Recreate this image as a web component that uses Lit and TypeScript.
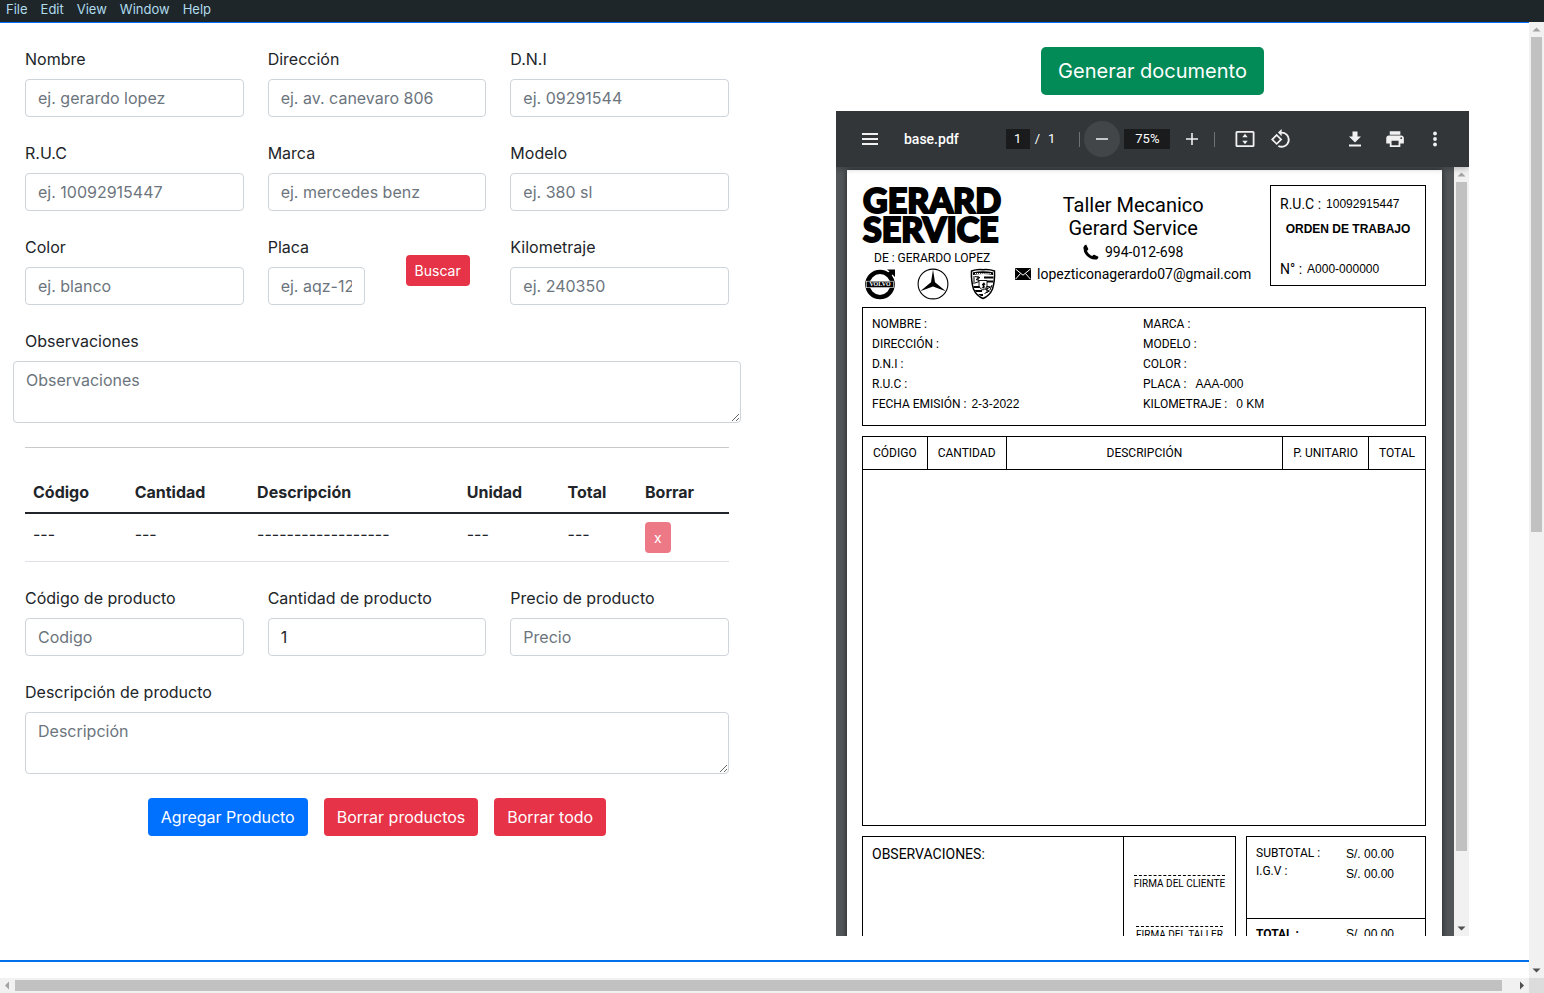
import { LitElement, html, css, svg, nothing } from "lit";
import { customElement, property } from "lit/decorators.js";
import { classMap } from "lit/directives/class-map.js";
import { styleMap } from "lit/directives/style-map.js";

@customElement("scroll-bar")
class ScrollBar extends LitElement {
  @property({ type: Boolean, reflect: true }) horizontal = false;
  @property({ type: Number }) thumb = 50;

  static styles = css`
    :host {
      display: flex;
      flex-direction: column;
      width: 15px;
      background: #f1f1f1;
      box-sizing: border-box;
    }
    :host([horizontal]) {
      flex-direction: row;
      width: auto;
      height: 15px;
    }
    .arrow {
      width: 15px;
      height: 15px;
      flex: none;
      display: block;
      fill: #a3a3a3;
    }
    .arrow.on {
      fill: #505050;
    }
    .track {
      flex: 1;
      display: flex;
      flex-direction: column;
      padding: 0 2px;
    }
    :host([horizontal]) .track {
      flex-direction: row;
      padding: 2px 0;
    }
    .thumb {
      background: #c1c1c1;
    }
  `;

  render() {
    const start = this.horizontal ? "M5 7.5 L9 3.5 V11.5 Z" : "M3.5 9.5 L7.5 5.5 L11.5 9.5 Z";
    const end = this.horizontal ? "M10 7.5 L6 3.5 V11.5 Z" : "M3.5 5.5 L7.5 9.5 L11.5 5.5 Z";
    return html`
      <svg class="arrow" viewBox="0 0 15 15"><path d=${start} /></svg>
      <div class="track"><div class="thumb" style=${styleMap({ flex: `0 0 ${this.thumb}%` })}></div></div>
      <svg class=${classMap({ arrow: true, on: true })} viewBox="0 0 15 15"><path d=${end} /></svg>
    `;
  }
}

@customElement("order-form")
class OrderForm extends LitElement {
  static styles = css`
    :host {
      display: block;
      font: 16px/24px Inter, sans-serif;
      color: #212529;
    }
    * {
      box-sizing: border-box;
    }
    form {
      display: flex;
      flex-direction: column;
      gap: 24px;
    }
    .row {
      display: grid;
      grid-template-columns: repeat(3, minmax(0, 1fr));
      gap: 24px;
    }
    .split {
      display: grid;
      grid-template-columns: repeat(2, minmax(0, 1fr));
      gap: 24px;
      place-items: center;
    }
    .field {
      display: flex;
      flex-direction: column;
      gap: 8px;
      width: 100%;
    }
    input,
    textarea {
      display: block;
      width: 100%;
      font: inherit;
      color: #212529;
      background: #fff;
      border: 1px solid #ced4da;
      border-radius: 4px;
      padding: 6px 12px;
      margin: 0;
      appearance: none;
    }
    input {
      height: 38px;
    }
    input[type="number"]::-webkit-inner-spin-button {
      appearance: none;
    }
    textarea {
      height: 62px;
      resize: vertical;
    }
    ::placeholder {
      color: #6c757d;
      opacity: 1;
    }
    .wide {
      margin: 0 -12px;
      width: auto;
    }
    .wide label {
      padding-left: 12px;
    }
    hr {
      width: 100%;
      margin: 0;
      border: 0;
      height: 1px;
      background: #c8c9ca;
    }
    table {
      width: 100%;
      border-collapse: collapse;
    }
    th,
    td {
      text-align: left;
      vertical-align: top;
      padding: 8px;
      border-bottom: 1px solid #dee2e6;
    }
    th {
      font-weight: 700;
      border-bottom: 2px solid #212529;
    }
    button {
      font: inherit;
      color: #fff;
      border: 1px solid transparent;
      border-radius: 4px;
      padding: 6px 12px;
      background-clip: border-box;
    }
    .primary {
      background: #0070ff;
    }
    .danger {
      background: #e63347;
    }
    .small {
      display: block;
      font-size: 14px;
      line-height: 21px;
      padding: 4px 8px;
    }
    button:disabled {
      opacity: 0.65;
    }
    .actions {
      display: flex;
      justify-content: center;
      gap: 16px;
    }
  `;

  private field(id: string, label: string, placeholder = "", value?: string) {
    return html`<div class="field">
      <label for=${id}>${label}</label>
      <input id=${id} type=${value ? "number" : "text"} placeholder=${placeholder || nothing} .value=${value ?? ""} />
    </div>`;
  }

  render() {
    return html`
      <form>
        <div class="row">
          ${this.field("nombre", "Nombre", "ej. gerardo lopez")}
          ${this.field("direccion", "Dirección", "ej. av. canevaro 806")}
          ${this.field("dni", "D.N.I", "ej. 09291544")}
          ${this.field("ruc", "R.U.C", "ej. 10092915447")}
          ${this.field("marca", "Marca", "ej. mercedes benz")}
          ${this.field("modelo", "Modelo", "ej. 380 sl")}
          ${this.field("color", "Color", "ej. blanco")}
          <div class="split">
            ${this.field("placa", "Placa", "ej. aqz-123")}
            <button type="button" class="danger small">Buscar</button>
          </div>
          ${this.field("km", "Kilometraje", "ej. 240350")}
        </div>
        <div class="field wide">
          <label for="obs">Observaciones</label>
          <textarea id="obs" placeholder="Observaciones"></textarea>
        </div>
        <hr />
        <table>
          <thead>
            <tr>
              ${["Código", "Cantidad", "Descripción", "Unidad", "Total", "Borrar"].map((t) => html`<th>${t}</th>`)}
            </tr>
          </thead>
          <tbody>
            <tr>
              ${["---", "---", "------------------", "---", "---"].map((t) => html`<td>${t}</td>`)}
              <td><button type="button" class="danger small" disabled>x</button></td>
            </tr>
          </tbody>
        </table>
        <div class="row">
          ${this.field("codigo", "Código de producto", "Codigo")}
          ${this.field("cantidad", "Cantidad de producto", "", "1")}
          ${this.field("precio", "Precio de producto", "Precio")}
        </div>
        <div class="field">
          <label for="desc">Descripción de producto</label>
          <textarea id="desc" placeholder="Descripción"></textarea>
        </div>
        <div class="actions">
          <button type="button" class="primary">Agregar Producto</button>
          <button type="button" class="danger">Borrar productos</button>
          <button type="button" class="danger">Borrar todo</button>
        </div>
      </form>
    `;
  }
}

const volvo = html`<svg width="30" height="32" viewBox="0 0 30 32">
  <circle cx="15" cy="16.5" r="12.6" fill="none" stroke="#000" stroke-width="4.4" />
  <path d="M22 1.500 H30 V9 L27.500 6.500 L24 10 L20.500 6.500 L24.500 3.500 Z" />
  <rect x="1.500" y="13.200" width="27" height="6.500" stroke="#fff" stroke-width="0.600" />
  <text x="15" y="18.400" text-anchor="middle" font-family="Liberation Serif, serif" font-weight="700" font-size="6" fill="#fff">VOLVO</text>
</svg>`;

const mercedes = html`<svg width="32" height="32" viewBox="0 0 32 32">
  <circle cx="16" cy="16" r="14.900" fill="none" stroke="#000" stroke-width="1.100" />
  <path d="M16 1.500 L18 14.300 L28.800 23.300 L16 18.500 L3.200 23.300 L14 14.300 Z" />
</svg>`;

const porsche = html`<svg width="26" height="32" viewBox="0 0 26 32">
  <path d="M1.500 3 Q7 1 13 1.700 Q19 1 24.500 3 Q25 13 22.500 21 Q19.500 28 13 30.500 Q6.500 28 3.500 21 Q1 13 1.500 3 Z" fill="#fff" stroke="#000" stroke-width="1.500" />
  <path d="M3 4.200 Q13 2.200 23 4.200 V7 Q13 5.200 3 7 Z" />
  <path d="M5 5.500 H21" stroke="#fff" stroke-width="1" stroke-dasharray="1.200 0.700" />
  <path d="M14 8.500 H23.500 V10.500 H14 Z M14 12.500 H23.300 V14.500 H14 Z M3.500 18 H12 V20 H4 Z M4.800 22 H12 V24 H6 Z M8 26 H13 V28 H11 Z" />
  <path d="M5 8.500 L10 9.500 L6 11.500 L10.500 13 L5 15 M4 8 V16 M8 8 V12 M15 18 L20.500 19 L15.500 21.500 L19.500 23 L14.500 25.500 M22 17 L20 22 M17 18 V25" fill="none" stroke="#000" stroke-width="1" />
  <path d="M9 12.500 H17 V18 Q16 21 13 22 Q10 21 9 18 Z" fill="#fff" stroke="#000" stroke-width="0.900" />
  <path d="M11.500 20 Q14 18.500 11.800 16.500 L14 14.200 L15.500 16.500 L14.300 17 Q15.500 19.500 14 20.500 Z" />
</svg>`;

const phone = html`<svg width="16" height="16" viewBox="0 0 16 16">
  <path d="M3.200 0.600 L5.200 4.800 Q5.400 5.400 4.900 5.900 L3.900 6.900 Q5.600 10.600 9.200 12 L10.200 11 Q10.700 10.500 11.300 10.800 L15.400 12.800 Q15.300 15.800 12.200 15.600 Q6.500 15.200 3 11 Q0.300 7.500 0.400 3.400 Q1 1 3.200 0.600 Z" />
</svg>`;

const envelope = html`<svg width="16" height="12" viewBox="0 0 16 12">
  <rect width="16" height="12" />
  <path d="M0.500 1 L8 7.200 L15.500 1 M0.500 11.200 L5.600 5.400 M15.500 11.200 L10.400 5.400" fill="none" stroke="#fff" stroke-width="1" />
</svg>`;

@customElement("order-sheet")
class OrderSheet extends LitElement {
  static styles = css`
    :host {
      display: block;
      background: #fff;
      color: #000;
      padding: 15px 16px 30px 15px;
      font: 12px/20px Roboto, sans-serif;
      box-sizing: border-box;
    }
    * {
      box-sizing: border-box;
    }
    svg {
      display: block;
      flex: none;
    }
    .head {
      display: flex;
      gap: 14px;
      height: 122px;
    }
    .brand {
      display: flex;
      flex-direction: column;
      white-space: nowrap;
    }
    .mark {
      font: 900 34px/29px Lato, sans-serif;
      -webkit-text-stroke: 2px #000;
      padding-left: 1px;
    }
    .owner {
      line-height: 16px;
      padding: 7px 0 2px 12px;
    }
    .logos {
      display: flex;
      justify-content: space-between;
      padding: 0 5px 0 3px;
    }
    .contact {
      display: flex;
      flex-direction: column;
      align-items: center;
      padding-top: 9px;
      font-size: 14px;
      line-height: 22px;
      white-space: nowrap;
    }
    .name {
      font-size: 20px;
      line-height: 23px;
      text-align: center;
      padding-bottom: 1px;
    }
    .line {
      display: flex;
      align-items: center;
      gap: 6px;
    }
    .folio {
      width: 156px;
      margin-left: auto;
      height: 101px;
      border: 1px solid #000;
      padding: 8px 9px;
      display: flex;
      flex-direction: column;
      white-space: nowrap;
    }
    .folio .pair {
      font-size: 14px;
    }
    .value {
      font-family: "Liberation Sans", sans-serif;
      font-size: 12px;
    }
    .order {
      font: 700 12px/20px "Liberation Sans", sans-serif;
      text-align: center;
      padding: 5px 0 20px;
    }
    .pair {
      display: flex;
      gap: 5px;
      white-space: nowrap;
    }
    .pair.far {
      gap: 9px;
    }
    .info {
      display: grid;
      grid-template-columns: 271px 1fr;
      border: 1px solid #000;
      padding: 6px 9px 11px;
    }
    table {
      width: 100%;
      margin-top: 10px;
      border-collapse: collapse;
    }
    th {
      font-weight: 400;
      padding: 6px 10px;
      border: 1px solid #000;
      white-space: nowrap;
      text-align: center;
    }
    .desc {
      width: 100%;
    }
    .items {
      height: 356px;
      padding: 0;
      border: 1px solid #000;
    }
    .foot {
      display: flex;
      gap: 10px;
      height: 134px;
      margin-top: 10px;
    }
    .notes {
      flex: 1;
      display: flex;
      border: 1px solid #000;
    }
    .obs {
      flex: 1;
      font-size: 14px;
      padding: 7px 9px;
    }
    .signs {
      width: 112px;
      border-left: 1px solid #000;
      padding: 38px 9px 0;
      display: flex;
      flex-direction: column;
      align-items: center;
      gap: 34px;
    }
    .sign {
      border-top: 1px dashed #000;
      font-size: 10px;
      line-height: 16px;
      white-space: nowrap;
    }
    .totals {
      width: 180px;
      border: 1px solid #000;
    }
    .sums {
      display: grid;
      grid-template-columns: 90px 1fr;
      height: 82px;
      padding: 7px 9px 0;
      border-bottom: 1px solid #000;
    }
    .labels {
      line-height: 18px;
    }
    .grand {
      display: grid;
      grid-template-columns: 90px 1fr;
      padding: 5px 9px;
    }
  `;

  private pair(label: string, value = "", far = false) {
    return html`<div class=${classMap({ pair: true, far })}>
      <span>${label}</span>${value ? html`<span class="value">${value}</span>` : nothing}
    </div>`;
  }

  render() {
    return html`
      <div class="head">
        <div class="brand">
          <div class="mark">GERARD<br />SERVICE</div>
          <div class="owner">DE : GERARDO LOPEZ</div>
          <div class="logos">${volvo}${mercedes}${porsche}</div>
        </div>
        <div class="contact">
          <div class="name">Taller Mecanico<br />Gerard Service</div>
          <div class="line">${phone}994-012-698</div>
          <div class="line">${envelope}lopezticonagerardo07@gmail.com</div>
        </div>
        <div class="folio">
          ${this.pair("R.U.C :", "10092915447")}
          <div class="order">ORDEN DE TRABAJO</div>
          ${this.pair("N° :", "A000-000000")}
        </div>
      </div>
      <div class="info">
        <div>
          ${this.pair("NOMBRE :")} ${this.pair("DIRECCIÓN :")} ${this.pair("D.N.I :")} ${this.pair("R.U.C :")}
          ${this.pair("FECHA EMISIÓN :", "2-3-2022")}
        </div>
        <div>
          ${this.pair("MARCA :")} ${this.pair("MODELO :")} ${this.pair("COLOR :")}
          ${this.pair("PLACA :", "AAA-000", true)} ${this.pair("KILOMETRAJE :", "0 KM", true)}
        </div>
      </div>
      <table>
        <thead>
          <tr>
            <th>CÓDIGO</th>
            <th>CANTIDAD</th>
            <th class="desc">DESCRIPCIÓN</th>
            <th>P. UNITARIO</th>
            <th>TOTAL</th>
          </tr>
        </thead>
        <tbody>
          <tr>
            <td class="items" colspan="5"></td>
          </tr>
        </tbody>
      </table>
      <div class="foot">
        <div class="notes">
          <div class="obs">OBSERVACIONES:</div>
          <div class="signs">
            <div class="sign">FIRMA DEL CLIENTE</div>
            <div class="sign">FIRMA DEL TALLER</div>
          </div>
        </div>
        <div class="totals">
          <div class="sums">
            <div class="labels">SUBTOTAL :<br />I.G.V :</div>
            <div class="value">S/. 00.00<br />S/. 00.00</div>
          </div>
          <div class="grand"><b>TOTAL :</b><span class="value">S/. 00.00</span></div>
        </div>
      </div>
    `;
  }
}

const glyphs = {
  menu: svg`<path d="M4 6 H20 V8 H4 Z M4 11 H20 V13 H4 Z M4 16 H20 V18 H4 Z" />`,
  minus: svg`<path d="M6 11 H18 V13 H6 Z" />`,
  plus: svg`<path d="M6 11.200 H11.200 V6 H12.800 V11.200 H18 V12.800 H12.800 V18 H11.200 V12.800 H6 Z" />`,
  fit: svg`<path fill-rule="evenodd" d="M4 4 H20 Q21.500 4 21.500 5.500 V18.500 Q21.500 20 20 20 H4 Q2.500 20 2.500 18.500 V5.500 Q2.500 4 4 4 Z M4.300 5.800 V18.200 H19.700 V5.800 Z M12 6.800 L14.700 10.200 H9.300 Z M12 17.200 L9.300 13.800 H14.700 Z" />`,
  rotate: svg`<path d="M7.300 6.400 L0.900 12.800 L7.400 19.200 L13.800 12.800 Z M3.700 12.800 L7.400 9.200 L11 12.800 L7.300 16.500 Z M19.400 6.600 A9 9 0 0 0 13 4 V0.800 L8.800 5 L13 9.200 V6 A7 7 0 1 1 10 19.300 L8.500 20.800 A9 9 0 0 0 19.400 6.600 Z" transform="translate(1.200 1.200) scale(0.880)" />`,
  download: svg`<path d="M18 9.500 H14.500 V4.500 H9.500 V9.500 H6 L12 15.500 Z M6 17.500 V19.500 H18 V17.500 Z" />`,
  print: svg`<path d="M19 8 H5 C3.300 8 2 9.300 2 11 V17 H6 V21 H18 V17 H22 V11 C22 9.300 20.700 8 19 8 Z M16 19 H8 V14 H16 Z M19 12 A1 1 0 1 1 19 10 A1 1 0 0 1 19 12 Z M18 3 H6 V7 H18 Z" transform="translate(1.500 1.500) scale(0.880)" />`,
  more: svg`<circle cx="12" cy="6.500" r="1.900" /><circle cx="12" cy="12" r="1.900" /><circle cx="12" cy="17.500" r="1.900" />`,
};

@customElement("pdf-viewer")
class PdfViewer extends LitElement {
  static styles = css`
    :host {
      display: flex;
      flex-direction: column;
      background: #525659;
      overflow: hidden;
    }
    * {
      box-sizing: border-box;
    }
    .bar {
      flex: none;
      height: 56px;
      display: grid;
      grid-template-columns: 1fr auto 1fr;
      align-items: center;
      background: #323639;
      color: #fff;
      font: 13px/20px Roboto, sans-serif;
      box-shadow: 0 -2px 8px rgba(0, 0, 0, 0.1), 0 2px 6px rgba(0, 0, 0, 0.2);
      z-index: 1;
    }
    .group {
      display: flex;
      align-items: center;
    }
    .left {
      gap: 16px;
      padding-left: 16px;
    }
    .right {
      gap: 4px;
      padding-right: 16px;
      justify-content: flex-end;
    }
    .title {
      font-size: 14px;
      font-weight: 500;
    }
    button {
      width: 36px;
      height: 36px;
      border: 0;
      border-radius: 50%;
      padding: 6px;
      background: none;
      fill: #f1f1f1;
    }
    button svg {
      display: block;
      width: 24px;
      height: 24px;
    }
    .active {
      background: #424649;
      fill: #c4c6c7;
    }
    input {
      height: 20px;
      border: 0;
      margin: 0;
      padding: 0;
      text-align: center;
      font: inherit;
      color: #fff;
      background: #191b1c;
    }
    .page {
      width: 24px;
    }
    .zoom {
      width: 46px;
      margin: 0 4px;
    }
    .slash {
      padding: 0 8px 0 5px;
    }
    .rule {
      width: 1px;
      height: 15px;
      background: #6f7274;
      margin-right: 4px;
    }
    .first {
      margin-left: 24px;
    }
    .second {
      margin: 0 12px 0 4px;
    }
    .body {
      flex: 1;
      min-height: 0;
      display: flex;
    }
    .canvas {
      flex: 1;
      min-width: 0;
      overflow: hidden;
      padding: 3px 12px 0 11px;
    }
    order-sheet {
      box-shadow: 0 0 6px rgba(0, 0, 0, 0.6);
    }
  `;

  private icon(name: keyof typeof glyphs, label: string, active = false) {
    return html`<button type="button" aria-label=${label} class=${classMap({ active })}>
      <svg viewBox="0 0 24 24">${glyphs[name]}</svg>
    </button>`;
  }

  render() {
    return html`
      <div class="bar">
        <div class="group left">${this.icon("menu", "Menú")}<span class="title">base.pdf</span></div>
        <div class="group">
          <input class="page" aria-label="Página" .value=${"1"} />
          <span class="slash">/</span><span>1</span>
          <span class="rule first"></span>
          ${this.icon("minus", "Alejar", true)}
          <input class="zoom" aria-label="Zoom" .value=${"75%"} />
          ${this.icon("plus", "Acercar")}
          <span class="rule second"></span>
          ${this.icon("fit", "Ajustar")}${this.icon("rotate", "Girar")}
        </div>
        <div class="group right">
          ${this.icon("download", "Descargar")}${this.icon("print", "Imprimir")}${this.icon("more", "Más")}
        </div>
      </div>
      <div class="body">
        <div class="canvas"><order-sheet></order-sheet></div>
        <scroll-bar .thumb=${90.5}></scroll-bar>
      </div>
    `;
  }
}

@customElement("app-root")
class AppRoot extends LitElement {
  static styles = css`
    :host {
      display: grid;
      grid-template: auto minmax(0, 1fr) auto / minmax(0, 1fr) auto;
      height: 100vh;
      overflow: hidden;
      background: #fff;
      font: 16px/24px Inter, sans-serif;
    }
    * {
      box-sizing: border-box;
    }
    nav {
      grid-column: 1 / -1;
      display: flex;
      gap: 13px;
      height: 22px;
      padding: 0 6px;
      background: #1f262a;
      font-size: 13px;
      line-height: 19px;
    }
    nav a {
      color: #b0dcec;
      text-decoration: none;
    }
    main {
      display: grid;
      grid-template-columns: minmax(0, 754fr) minmax(0, 775fr);
      border-top: 1px solid #0070ff;
      border-bottom: 2px solid #006fe8;
      margin-bottom: 16px;
    }
    order-form {
      padding: 24px 25px;
    }
    .preview {
      display: flex;
      flex-direction: column;
      align-items: center;
      gap: 16px;
      padding: 24px 60px 24px 82px;
      min-height: 0;
    }
    .generate {
      border: 1px solid transparent;
      border-radius: 5px;
      padding: 8px 16px;
      font: 20px/30px Inter, sans-serif;
      color: #fff;
      background: #028a57;
    }
    pdf-viewer {
      flex: 1;
      min-height: 0;
      align-self: stretch;
    }
    .corner {
      background: #dcdcdc;
    }
  `;

  render() {
    return html`
      <nav>${["File", "Edit", "View", "Window", "Help"].map((m) => html`<a href="#">${m}</a>`)}</nav>
      <main>
        <order-form></order-form>
        <section class="preview">
          <button type="button" class="generate">Generar documento</button>
          <pdf-viewer></pdf-viewer>
        </section>
      </main>
      <scroll-bar .thumb=${53.5}></scroll-bar>
      <scroll-bar horizontal .thumb=${99.2}></scroll-bar>
      <div class="corner"></div>
    `;
  }
}
